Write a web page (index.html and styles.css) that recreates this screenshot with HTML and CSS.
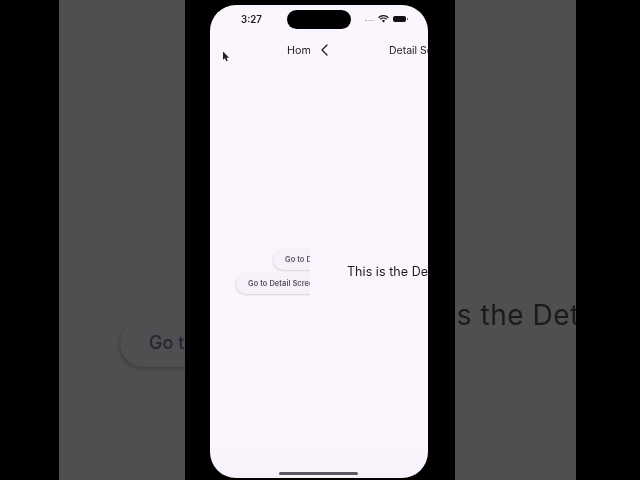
FILE: index.html
```html
<!DOCTYPE html>
<html lang="en">
<head>
<meta charset="utf-8">
<title>Detail Screen</title>
<link rel="stylesheet" href="styles.css">
</head>
<body>
<div class="stage">
  <section class="backdrop backdrop-left">
    <div class="ghost-button"><span>Go to Detail Screen</span></div>
  </section>
  <main class="phone">
    <div class="screens">
      <section class="pane pane-home">
        <header class="nav nav-home"><span>Home</span></header>
        <div class="pane-body home-body">
          <div class="pill pill-top"><span>Go to Detail Screen</span></div>
          <div class="pill pill-bottom"><span>Go to Detail Screen</span></div>
        </div>
      </section>
      <section class="pane pane-detail">
        <header class="nav nav-detail">
          <svg class="back" viewBox="0 0 9 14" width="9" height="14" aria-hidden="true"><path d="M7 2 2 7l5 5" fill="none" stroke="#1d1b20" stroke-width="1.3" stroke-linecap="round" stroke-linejoin="round"/></svg>
          <span class="detail-title">Detail Screen</span>
        </header>
        <div class="pane-body detail-body"><p class="detail-text">This is the Detail Screen</p></div>
      </section>
    </div>
    <div class="status">
      <span class="time">3:27</span>
      <span class="island"></span>
      <span class="status-icons">
        <span class="signal"><i></i><i></i><i></i><i></i></span>
        <svg width="11" height="8" viewBox="0 0 11 8" aria-hidden="true"><path d="M.6 2.7a7 7 0 0 1 9.8 0M2.3 4.4a4.6 4.6 0 0 1 6.4 0" fill="none" stroke="#111" stroke-width="1.3"/><path d="M3.9 5.7a2.3 2.3 0 0 1 3.2 0L5.5 7.6z" fill="#111"/></svg>
        <span class="battery"></span>
      </span>
    </div>
    <svg class="cursor" width="8" height="12" viewBox="0 0 8 12" aria-hidden="true"><path d="M1 .6v8.2l2-1.6 1.2 3 1.5-.6-1.2-2.9h2.6z" fill="#222"/></svg>
    <div class="home-indicator"></div>
  </main>
  <section class="backdrop backdrop-right">
    <p class="ghost-text">This is the Detail Screen</p>
  </section>
</div>
</body>
</html>
```
FILE: styles.css
```css
* { box-sizing: border-box; }
html, body { margin: 0; height: 100%; background: #000; overflow: hidden; }
body { font-family: Inter, "Liberation Sans", sans-serif; }

.stage { width: 640px; height: 480px; display: flex; align-items: stretch; padding-left: 59px; filter: blur(.3px); }

.backdrop { background: #504e50; overflow: hidden; display: flex; }
.backdrop-left { width: 126px; padding: 320px 0 0 61px; }
.backdrop-right { width: 121px; margin-left: 27.5px; padding-top: 300px; }

.ghost-button { flex: none; width: 220px; height: 47px; border-radius: 25px; background: #504e50; box-shadow: -1px 2px 3px rgba(30,28,32,.3); padding: 11px 0 0 29px; font-size: 18px; font-weight: 500; line-height: 24px; color: #272433; white-space: nowrap; filter: blur(.5px); }

.ghost-text { margin: 0; flex: none; margin-left: -72px; font-size: 28px; line-height: 30px; letter-spacing: .5px; color: #1b1a1c; white-space: nowrap; filter: blur(.5px); }

.phone { position: relative; flex: none; width: 217.5px; height: 473px; margin: 5px 0 0 25px; background: linear-gradient(#fbf6fe 92%, #f7f2f9 100%); border-radius: 26px; overflow: hidden; }

.screens { display: flex; height: 100%; }
.pane { overflow: hidden; display: flex; flex-direction: column; }
.pane-home { width: 100px; }
.pane-detail { width: 117.5px; }

.nav { flex: none; height: 26px; margin-top: 32px; display: flex; align-items: center; font-size: 10.8px; color: #1d1b20; white-space: nowrap; }
.nav-home { padding-left: 77px; }
.nav-detail { padding-left: 10px; }
.back { flex: none; }
.detail-title { margin-left: 60px; font-size: 10.5px; }

.pane-body { flex: 1; }
.home-body { padding: 186px 0 0; display: flex; flex-direction: column; gap: 3px; }
.pill { flex: none; width: 130px; height: 21px; border-radius: 11px; background: #f6f0f9; box-shadow: -.5px 1px 2px rgba(60,50,70,.2); padding-left: 12px; font-size: 7.4px; font-weight: 600; line-height: 21px; letter-spacing: .1px; color: #5a5268; white-space: nowrap; }
.pill-top { margin-left: 63px; }
.pill-bottom { margin-left: 26px; }

.detail-body { padding: 200px 0 0 37px; }
.detail-text { margin: 0; font-size: 12.5px; line-height: 18px; letter-spacing: .05px; color: #1d1b20; white-space: nowrap; }

.status { position: absolute; left: 0; right: 0; top: 5px; height: 19px; }
.time { position: absolute; left: 31px; top: 4px; font-size: 9.7px; font-weight: 600; line-height: 12px; color: #1a1a1a; }
.island { position: absolute; left: 77px; top: 0; width: 64px; height: 19px; border-radius: 10px; background: #000; }
.status-icons { position: absolute; left: 155px; top: 5px; display: flex; align-items: center; gap: 3px; }
.signal { display: flex; gap: 1px; margin-right: 1px; }
.signal i { width: 1.5px; height: 1.5px; margin-top: 3px; background: #b5b2b8; }
.battery { position: relative; width: 13px; height: 6.5px; border-radius: 2px; background: #111; margin-left: 1px; }
.battery::after { content: ""; position: absolute; left: 13.5px; top: 2px; width: 1px; height: 2.5px; background: #777; }

.cursor { position: absolute; left: 12px; top: 46px; }

.home-indicator { position: absolute; left: 69px; bottom: 3px; width: 79px; height: 3px; border-radius: 2px; background: #5d5762; }
```
